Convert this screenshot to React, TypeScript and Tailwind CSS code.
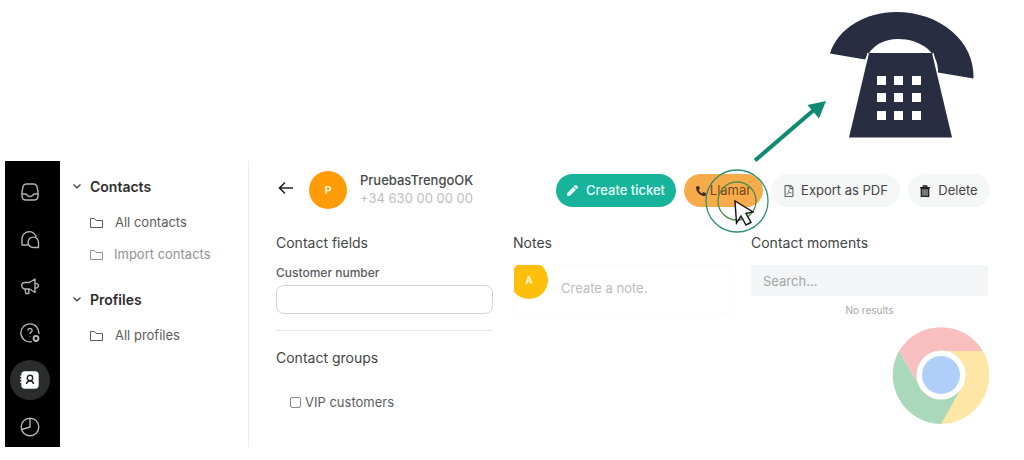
import { useState } from "react";
import type { ReactNode } from "react";
import { FaPen, FaPhoneAlt, FaRegFilePdf } from "react-icons/fa";

const NAV_ITEMS: { label: string; active?: boolean; icon: ReactNode }[] = [
  {
    label: "Inbox",
    icon: (
      <>
        <path d="M6 2h8q2.200 0 2.800 2L18 9.500V14q0 4-4 4H6q-4 0-4-4V9.500L3.200 4Q3.800 2 6 2Z" />
        <path d="M2 12h3.500c1.500 0 1.500 2.500 4.500 2.500s3-2.500 4.500-2.500H18" />
      </>
    ),
  },
  {
    label: "Team chat",
    icon: (
      <>
        <path d="M8 16H2V9.500a7.200 7.200 0 0 1 14.200-1.300" />
        <path d="M18.500 18.500h-5.300a5.200 5.200 0 1 1 5.300-5.200Z" />
      </>
    ),
  },
  {
    label: "Broadcast",
    icon: (
      <>
        <path d="M5 6.500h4.500L15 3v13.500L9.500 13H5a3.200 3.200 0 0 1 0-6.500Z" />
        <path d="M15 7.500c4.500-.5 4.500 5 0 4.500M5 13l.8 4.500h3V13" />
      </>
    ),
  },
  {
    label: "Help",
    icon: (
      <>
        <path d="M12 18.600A9 9 0 1 1 18.800 11" />
        <path d="M7.900 7.500c.2-2.800 4.300-2.600 4.200 0 0 1.700-2.100 1.700-2.100 3.600M10 13.300v.5" />
        <circle cx="16" cy="15.500" r="2.400" strokeWidth="2" />
      </>
    ),
  },
  {
    label: "Contacts",
    active: true,
    icon: (
      <>
        <rect x="2" y="2" width="16" height="16" rx="3" fill="#fff" stroke="#fff" />
        <path d="M1 5.500v9" stroke="#fff" strokeDasharray="1.500 1.500" />
        <circle cx="10" cy="8" r="2.700" stroke="#222" />
        <path d="M6.500 14c.3-4 6.700-4 7 0" stroke="#222" />
      </>
    ),
  },
  {
    label: "Reports",
    icon: (
      <>
        <circle cx="10" cy="10" r="8.800" />
        <path d="M10 1.200V10l-8.200 2.500" />
      </>
    ),
  },
];

const GROUPS = [
  {
    title: "Contacts",
    items: [
      { label: "All contacts", muted: false },
      { label: "Import contacts", muted: true },
    ],
  },
  { title: "Profiles", items: [{ label: "All profiles", muted: false }] },
];

function NavBar() {
  return (
    <nav className="flex w-[55px] shrink-0 flex-col items-center gap-[7px] bg-black pt-[11px] pr-1.5">
      {NAV_ITEMS.map(({ label, active, icon }) => (
        <button
          key={label}
          aria-label={label}
          className={`flex size-10 items-center justify-center rounded-full ${active ? "bg-[#2b2c2c]" : ""}`}
        >
          <svg
            viewBox="0 0 20 20"
            className="size-5"
            fill="none"
            stroke="#b4b4b4"
            strokeWidth="1.400"
            strokeLinejoin="round"
          >
            {icon}
          </svg>
        </button>
      ))}
    </nav>
  );
}

function FolderList() {
  return (
    <aside className="w-[189px] shrink-0 border-r border-[#ececec] pt-[15px] pl-3">
      {GROUPS.map(({ title, items }) => (
        <section key={title} className="mb-[18px]">
          <button className="flex h-5 items-center gap-2 text-[14px] font-semibold text-[#2e2e2e]">
            <svg viewBox="0 0 10 10" className="size-2.5" fill="none" stroke="#444" strokeWidth="1.300">
              <path d="M1.500 3.500 5 6.800l3.500-3.300" />
            </svg>
            {title}
          </button>
          <ul className="pt-[11px] pl-[18px]">
            {items.map(({ label, muted }) => (
              <li key={label}>
                <a
                  href="#"
                  className={`flex h-8 items-center text-[13px] ${muted ? "gap-[11px] text-[#929292]" : "gap-3 text-[#5c5c5c]"}`}
                >
                  <svg viewBox="0 0 13 12" className="h-3 w-[13px]" fill="none" stroke="currentColor">
                    <path d="M.5 10.500v-9h4l1.500 2h6.500v7Z" strokeLinejoin="round" />
                  </svg>
                  {label}
                </a>
              </li>
            ))}
          </ul>
        </section>
      ))}
    </aside>
  );
}

// Click rings with the mouse pointer in their centre
function ClickMarker() {
  return (
    <svg
      viewBox="0 0 64 64"
      className="pointer-events-none absolute -top-[5px] left-[21px] size-16"
      fill="none"
      aria-hidden="true"
    >
      <circle cx="32" cy="32" r="31" stroke="#2c8f74" strokeWidth="1.300" />
      <circle cx="32" cy="32" r="19" stroke="#4b8e4c" strokeWidth="1.300" />
      <path d="M30 32 48 43l-7 1.500 5 9-5 2.500-5-9-4.500 7Z" fill="#fff" stroke="#111" strokeWidth="1.400" />
    </svg>
  );
}

function PhoneCallout() {
  return (
    <svg viewBox="750 0 240 161" className="h-[161px] w-[240px] overflow-visible" aria-hidden="true">
      <path d="M755 160.500 815 109" stroke="#118a73" strokeWidth="4" />
      <path d="m826 101-18.500 4 11.500 13.500Z" fill="#118a73" />
      <path
        d="M830 53.500C838 28 866 12 896 12c44 0 79 29 77.500 66.500L938 72.500C939 52 920 39 898 39c-14 0-26 6-33 20.500Z"
        fill="#282d42"
      />
      <path d="M869 53h63l20 84.500H849Z" fill="#282d42" />
      <path d="m868 53-3 12M933 53l4.500 18" stroke="#fff" strokeWidth="1.200" />
      {[76, 93, 111].map((y) =>
        [877, 894, 912].map((x) => <rect key={`${x}-${y}`} x={x} y={y} width="9" height="9" fill="#fff" />)
      )}
    </svg>
  );
}

function BrowserLogo() {
  return (
    <svg viewBox="0 0 98 98" className="-mr-0.5 size-[98px] self-end" aria-hidden="true">
      <path d="M91 25A49 49 0 0 1 49 98L49 49V25Z" fill="#fee6a6" />
      <path d="M7 25A49 49 0 0 0 49 98L70 61H28Z" fill="#a9d8ba" />
      <path d="M7 25A49 49 0 0 1 91 25H49L28 61Z" fill="#f9bfbe" />
      <circle cx="49" cy="49" r="24.500" fill="#fff" />
      <circle cx="49" cy="49" r="19" fill="#afcffa" />
    </svg>
  );
}

function ContactHeader() {
  return (
    <header className="flex items-start">
      <button aria-label="Back" className="mt-[19px]">
        <svg viewBox="0 0 20 16" className="h-4 w-5" fill="none" stroke="#222" strokeWidth="1.600">
          <path d="M17 8H4M9 2.500 3.500 8 9 13.500" />
        </svg>
      </button>
      <div className="mt-2.5 ml-[13px] flex size-[38px] items-center justify-center rounded-full bg-[#ff9c07] text-[11px] font-bold text-[#fff3d0]">
        P
      </div>
      <div className="mt-2.5 ml-[13px] text-[13px] leading-[18px]">
        <h1 className="font-medium text-[#484848]">PruebasTrengoOK</h1>
        <p className="text-[#bdbdbd]">+34 630 00 00 00</p>
      </div>
      <div className="mt-[13px] -mr-0.5 ml-auto flex gap-2 text-[13px] whitespace-nowrap text-[#444]">
        <button className="flex h-[33px] w-[120px] items-center justify-center gap-2 rounded-full bg-[#17b39b] font-medium text-[#e8fffa]">
          <FaPen className="size-[11px]" />
          Create ticket
        </button>
        <div className="relative">
          <button className="flex h-[33px] w-[79px] items-center justify-center gap-1 rounded-full bg-[#f8ab4b] text-[#74461c]">
            <FaPhoneAlt className="size-2.5 text-[#402b18]" />
            Llamar
          </button>
          <ClickMarker />
        </div>
        <button className="flex h-[33px] w-[129px] items-center justify-center gap-1.5 rounded-full bg-[#f5f6f6]">
          <FaRegFilePdf className="size-3 text-[#666]" />
          Export as PDF
        </button>
        <button className="flex h-[33px] w-[82px] items-center justify-center gap-2 rounded-full bg-[#f5f6f6]">
          <svg viewBox="0 0 10 12" className="h-3 w-2.5" fill="#777" stroke="#222" strokeWidth="1.300">
            <path d="M1.300 3.500h7.400v7.800H1.300ZM0 2.700h10M3.300 2.500V.8h3.400v1.700" />
          </svg>
          Delete
        </button>
      </div>
    </header>
  );
}

export default function App() {
  const [isVip, setIsVip] = useState(false);

  return (
    <div className="bg-white font-['Inter',sans-serif] text-[#444]">
      <div className="flex justify-end pr-[34px]">
        <PhoneCallout />
      </div>
      <div className="flex pl-[5px]">
        <NavBar />
        <FolderList />
        <main className="min-w-0 flex-1 pr-9 pl-[27px]">
          <ContactHeader />
          <div className="mt-6 grid grid-cols-[217fr_218fr_237fr] gap-5">
            <section>
              <h2 className="text-[14px] leading-5">Contact fields</h2>
              <label htmlFor="customer-number" className="mt-2.5 block text-[12px] leading-5 font-medium text-[#5c5c5c]">
                Customer number
              </label>
              <input
                id="customer-number"
                className="mt-0.5 block h-[29px] w-full rounded-lg border border-[#d3d3d3] px-2 text-[13px]"
              />
              <hr className="mt-4 border-[#e4e4e4]" />
              <h2 className="mt-[17px] text-[14px] leading-5">Contact groups</h2>
              <label className="mt-6 ml-3.5 flex items-center gap-1 text-[13px] leading-5 text-[#5c5c5c]">
                <input
                  type="checkbox"
                  checked={isVip}
                  onChange={(e) => setIsVip(e.target.checked)}
                  className="size-[11px] appearance-none rounded-xs border border-[#8a8a8a] checked:bg-[#17b39b]"
                />
                VIP customers
              </label>
            </section>
            <section>
              <h2 className="text-[14px] leading-5">Notes</h2>
              <div className="mt-[11px] flex h-[50px] overflow-hidden rounded-sm border border-[#fafafa]">
                <span className="-mt-1 -ml-1 flex size-[38px] shrink-0 items-center justify-center rounded-full bg-[#fdbf0b] text-[10px] font-bold text-[#fff6c8]">
                  A
                </span>
                <input
                  aria-label="Create a note"
                  placeholder="Create a note."
                  className="ml-[13px] w-full min-w-0 text-[13px] placeholder:text-[#bcbcbc]"
                />
              </div>
            </section>
            <section className="flex flex-col">
              <h2 className="text-[14px] leading-5">Contact moments</h2>
              <input
                type="search"
                aria-label="Search contact moments"
                placeholder="Search..."
                className="mt-3 h-[31px] w-full rounded-sm bg-[#f3f5f6] px-3 text-[13px] placeholder:text-[#a2a5a7]"
              />
              <p className="mt-1.5 mb-2 text-center text-[10px] leading-4 text-[#a6a6a6]">No results</p>
              <BrowserLogo />
            </section>
          </div>
        </main>
      </div>
    </div>
  );
}
